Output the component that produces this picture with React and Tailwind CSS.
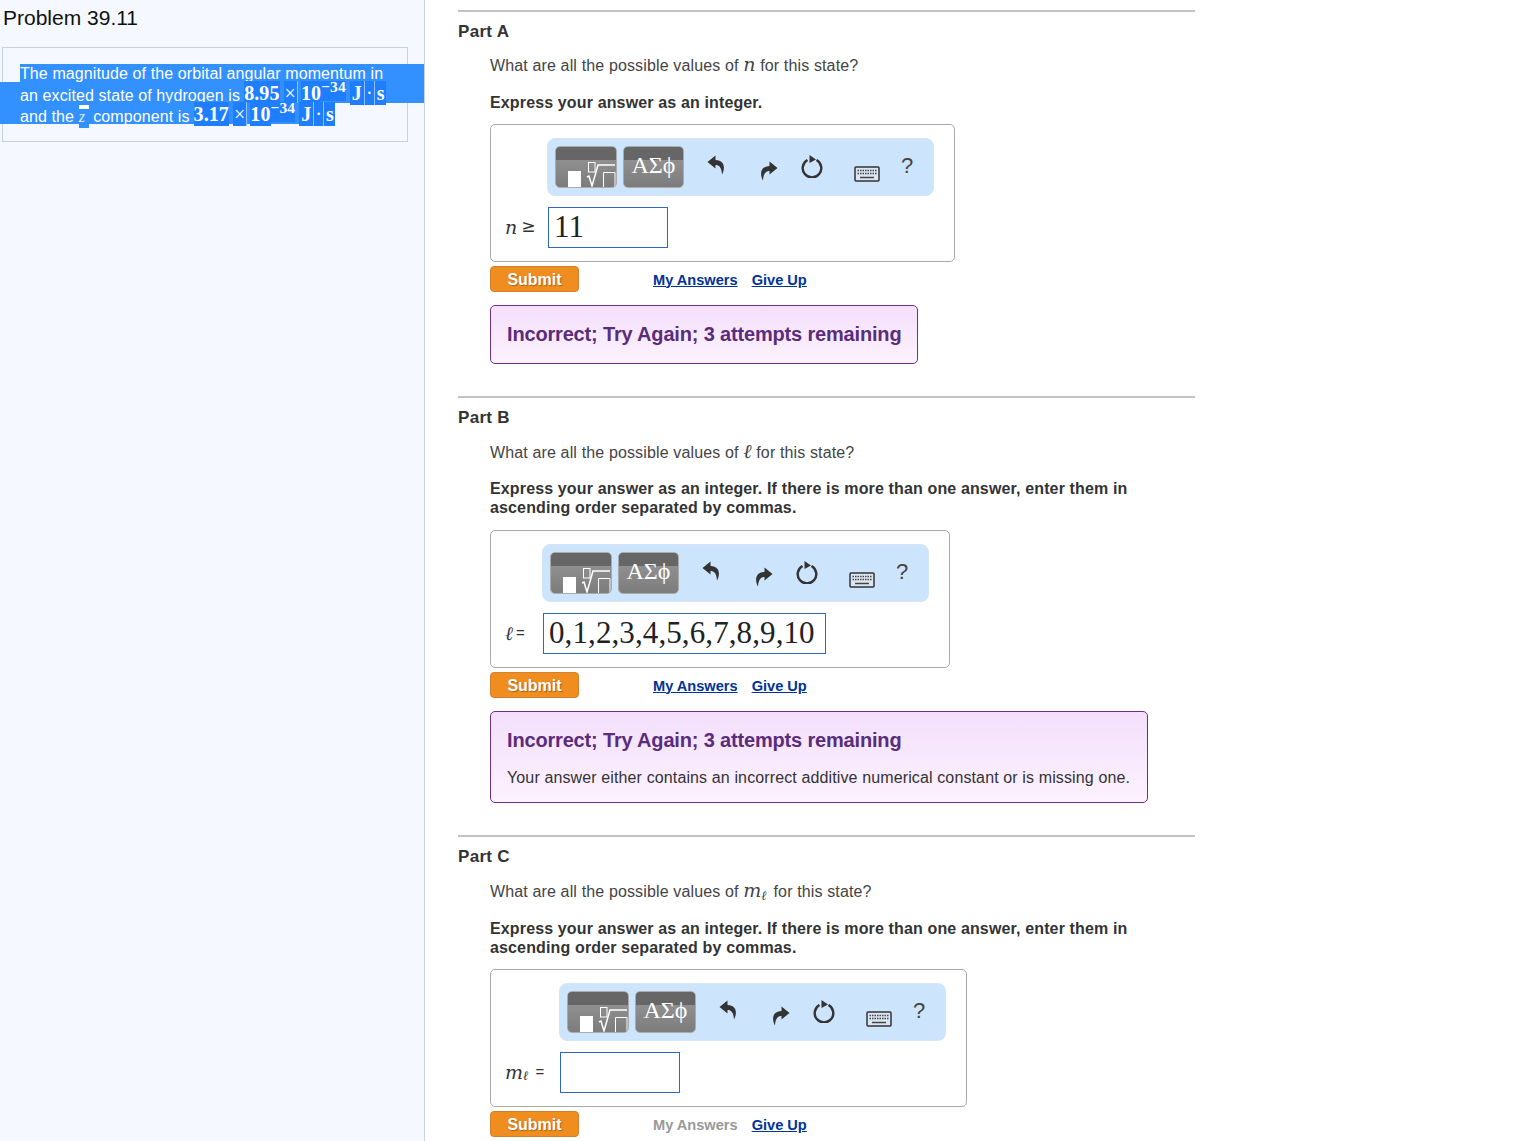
import React from 'react';

const sans = { fontFamily: '"Liberation Sans", Arial, sans-serif' };

const Mi = ({ children, className = 'text-[19px]' }) => (
  <span className={`font-['DejaVu_Serif',serif] italic leading-none ${className}`}>{children}</span>
);

// bits of the selected formula, each with its own darker highlight
const Sel = ({ children, className = '' }) => (
  <span className={`bg-[#1f7eff] font-['Liberation_Serif',serif] font-bold text-[20px] h-[24px] leading-[24px] inline-block ${className}`}>
    {children}
  </span>
);

const Formula = ({ value }) => (
  <span className="relative -top-[1px] inline-flex items-start h-[24px] ml-[4px] align-baseline">
    <Sel>{value}</Sel>
    <Sel className="font-normal ml-[4px] px-[1px] border-r border-[#8fc0ff]">×</Sel>
    <Sel className="ml-[3px]">10</Sel>
    <span className="font-['Liberation_Serif',serif] font-bold text-[15.500px] leading-[12px] h-[20px] bg-[#1f7eff]">−34</span>
    <Sel className="ml-[4px] px-[2px] border-r border-[#8fc0ff]">J</Sel>
    <Sel className="font-normal px-[1px] border-r border-[#8fc0ff]">·</Sel>
    <Sel className="pl-[2px] pr-[1px]">s</Sel>
  </span>
);

const RootIcon = () => (
  <svg width="62" height="30" viewBox="0 0 62 30" className="absolute left-0 bottom-0">
    <rect x="12" y="14" width="13" height="16" fill="#fff" />
    <rect x="32.500" y="5.500" width="6.500" height="9.500" fill="none" stroke="#fff" strokeWidth="1" />
    <path d="M31 20l2-1 3 10 6-21h17" fill="none" stroke="#fff" strokeWidth="1.500" />
    <path d="M47.500 30V15.500h11.500V30" fill="none" stroke="#fff" strokeWidth="1" />
  </svg>
);

const UndoIcon = ({ flip }) => (
  <svg width="18" height="20" viewBox="0 0 18 20" className={flip ? '-scale-x-100' : ''}>
    <path d="M8.500 0.500L0.500 7l8 6.500V10c3.500 0 6 2 6.500 9.500 3-5.500 3.500-14-6.500-14.500z" fill="#333" />
  </svg>
);

const ResetIcon = () => (
  <svg width="24" height="24" viewBox="0 0 24 24">
    <path d="M7.500 6a9.300 9.300 0 1 0 9 0" fill="none" stroke="#333" strokeWidth="2.400" />
    <path d="M9.500 1l6.500 4.500-6.500 3.500z" fill="#333" />
  </svg>
);

const KeyboardIcon = () => (
  <svg width="26" height="16" viewBox="0 0 26 16">
    <rect x="1" y="1" width="24" height="14" rx="1" fill="#dbe6f2" stroke="#333" strokeWidth="1.500" />
    <path d="M3.500 4.500h19M3.500 7.500h19" stroke="#444" strokeWidth="1.500" strokeDasharray="1.500 1" />
    <path d="M6 11.500h14" stroke="#444" strokeWidth="1.500" />
  </svg>
);

const Toolbar = () => (
  <div className="w-[387px] h-[58px] rounded-[8px] bg-[#cde4fd] border border-[#d6e5f5] flex items-start pl-[7px] pt-[7px]">
    <div className="relative w-[62px] h-[42px] rounded-[5px] border border-[#aaa] overflow-hidden bg-[linear-gradient(#999,#7c7c7c)]">
      <div className="h-[13px] bg-[#666]" />
      <RootIcon />
    </div>
    <div className="relative w-[61px] h-[42px] ml-[6px] rounded-[5px] border border-[#aaa] overflow-hidden bg-[linear-gradient(#999,#7c7c7c)]">
      <div className="h-[13px] bg-[#666]" />
      <span className="absolute inset-x-0 top-[3px] text-center text-white text-[24px] leading-[30px] font-['Liberation_Serif',serif]">ΑΣϕ</span>
    </div>
    <div className="ml-[23px] mt-[9px]"><UndoIcon /></div>
    <div className="ml-[35px] mt-[15px]"><UndoIcon flip /></div>
    <div className="ml-[22px] mt-[8px]"><ResetIcon /></div>
    <div className="ml-[30px] mt-[20px]"><KeyboardIcon /></div>
    <div className="ml-[21px] mt-[6px] text-[#444] text-[22px] leading-[28px]">?</div>
  </div>
);

const Answer = ({ label, labelWidth, value, inputWidth = 'w-[120px]', width, top = 'mt-[12px]' }) => (
  <div className={`${width} h-[138px] ${top} border border-[#aaa] rounded-[5px] bg-white flex`}>
    <div className={`${labelWidth} shrink-0 flex items-center h-[24px] mt-[90px] pl-[14px] text-[#333] whitespace-nowrap`}>{label}</div>
    <div className="pt-[13px]">
      <Toolbar />
      <div className={`${inputWidth} h-[41px] mt-[11px] ml-[1px] border border-[#2f66c8] px-[5px] font-['Liberation_Serif',serif] text-[31px] leading-[37px] text-[#222] whitespace-nowrap tracking-[0.1px]`}>
        {value}
      </div>
    </div>
  </div>
);

const Actions = ({ answersOff }) => (
  <div className="flex items-center mt-[4px] h-[26px]">
    <button className="w-[89px] h-[26px] rounded-[4px] bg-[#ef8d1e] border border-[#d28030] text-white font-bold text-[16px] leading-[26px] [text-shadow:1px_1px_1px_#a8651a]">
      Submit
    </button>
    <a className={`ml-[74px] font-bold text-[14.600px] mt-[3px] ${answersOff ? 'text-[#999]' : 'text-[#003399] underline'}`}>My Answers</a>
    <a className="ml-[14px] font-bold text-[14.600px] mt-[3px] text-[#003399] underline">Give Up</a>
  </div>
);

const Feedback = ({ width, children }) => (
  <div className={`${width} mt-[13px] px-[16px] pt-[16px] ${children ? 'pb-[14px]' : 'pb-[16px]'} border border-[#6b2f8e] rounded-[5px] bg-[linear-gradient(#f3dffb,#fdf2ff)]`}>
    <div className="font-bold text-[20px] leading-[25px] tracking-[-0.170px] whitespace-nowrap text-[#5a2d7c]">Incorrect; Try Again; 3 attempts remaining</div>
    {children}
  </div>
);

const Part = ({ title, question, hint, questionTop = 'mt-[14px]', children }) => (
  <section className="mb-[32px]">
    <div className="border-t-2 border-[#c2c2c2] w-[737px]" />
    <h2 className="mt-[11px] font-bold text-[17px] leading-[18px] tracking-[0.3px] text-[#333]">{title}</h2>
    <div className="pl-[32px]">
      <p className={`${questionTop} h-[20px] text-[16px] leading-[20px] tracking-[0.140px] text-[#444] whitespace-nowrap`}>{question}</p>
      <p className="mt-[18px] w-[660px] font-bold text-[16px] leading-[19px] tracking-[0.140px] text-[#333]">{hint}</p>
      {children}
    </div>
  </section>
);

const ManyHint = 'Express your answer as an integer. If there is more than one answer, enter them in ascending order separated by commas.';

export default function App() {
  return (
    <div className="flex h-[1141px] overflow-hidden bg-white" style={sans}>
      <aside className="w-[425px] shrink-0 bg-[#f5f9ff] border-r border-[#c3d3e3] pl-[2px]">
        <h1 className="pt-[6px] pl-[1px] text-[21px] leading-[24px] text-[#111]">Problem 39.11</h1>
        <div className="w-[406px] h-[95px] mt-[17px] border border-[#c3d3e3] pt-[16px] text-white text-[16px] tracking-[0.1px]">
          <div className="relative h-[18px] leading-[20px] ml-[17px] w-[404px] bg-[#3390ff] whitespace-nowrap">
            The magnitude of the orbital angular momentum in
          </div>
          <div className="relative h-[21px] leading-[23px] -ml-[3px] w-[424px] pl-[20px] bg-[#3390ff] whitespace-nowrap">
            an excited state of hydrogen is<Formula value="8.95" />
          </div>
          <div className="relative h-[21px] leading-[23px] -ml-[3px] w-[334px] pl-[20px] bg-[#3390ff] whitespace-nowrap">
            and the <span className="inline-block w-[10px] bg-[linear-gradient(#fff_4px,#3390ff_4px)] font-['Liberation_Serif',serif] italic text-[#dbe9ff]">z</span> component is<Formula value="3.17" />
          </div>
        </div>
      </aside>

      <main className="pl-[33px] pt-[10px]">
        <Part
          title="Part A"
          question={<>What are all the possible values of <Mi>n</Mi> for this state?</>}
          hint="Express your answer as an integer."
        >
          <Answer
            width="w-[465px]"
            labelWidth="w-[56px]"
            label={<><Mi>n</Mi><span className="ml-[4px] text-[17px] font-['DejaVu_Sans',sans-serif]">≥</span></>}
            value="11"
          />
          <Actions />
          <Feedback width="w-[428px]" />
        </Part>

        <Part
          title="Part B"
          question={<>What are all the possible values of <Mi className="text-[20px]">ℓ</Mi> for this state?</>}
          hint={ManyHint}
        >
          <Answer
            top="mt-[13px]"
            width="w-[460px]"
            labelWidth="w-[51px]"
            label={<><Mi className="text-[19px]">ℓ</Mi><span className="ml-[3px] text-[15px]">=</span></>}
            inputWidth="w-[283px]"
            value="0,1,2,3,4,5,6,7,8,9,10"
          />
          <Actions />
          <Feedback width="w-[658px]">
            <p className="mt-[15px] text-[16px] leading-[20px] tracking-[0.125px] text-[#333] whitespace-nowrap">
              Your answer either contains an incorrect additive numerical constant or is missing one.
            </p>
          </Feedback>
        </Part>

        <Part
          title="Part C"
          questionTop="mt-[15px]"
          question={<>What are all the possible values of <Mi>m</Mi><Mi className="text-[13px] align-[-3px] mr-[2px]">ℓ</Mi> for this state?</>}
          hint={ManyHint}
        >
          <Answer
            width="w-[477px]"
            labelWidth="w-[68px]"
            label={<><Mi>m</Mi><Mi className="text-[13px] mt-[7px]">ℓ</Mi><span className="ml-[7px] text-[15px]">=</span></>}
            value=""
          />
          <Actions answersOff />
        </Part>
      </main>
    </div>
  );
}
